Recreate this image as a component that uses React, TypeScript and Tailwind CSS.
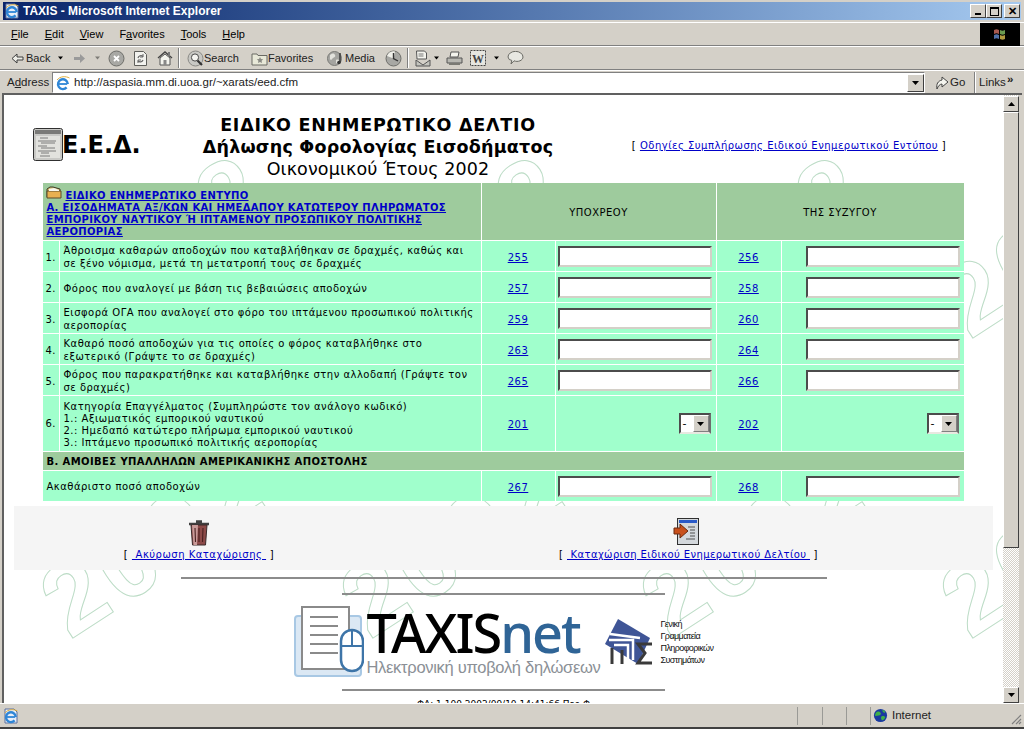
import type { ReactNode } from "react";

const rows = [
  { n: "1.", a: "255", b: "256", text: ["Άθροισμα καθαρών αποδοχών που καταβλήθηκαν σε δραχμές, καθώς και", "σε ξένο νόμισμα, μετά τη μετατροπή τους σε δραχμές"] },
  { n: "2.", a: "257", b: "258", text: ["Φόρος που αναλογεί με βάση τις βεβαιώσεις αποδοχών"] },
  { n: "3.", a: "259", b: "260", text: ["Εισφορά ΟΓΑ που αναλογεί στο φόρο του ιπτάμενου προσωπικού πολιτικής", "αεροπορίας"] },
  { n: "4.", a: "263", b: "264", text: ["Καθαρό ποσό αποδοχών για τις οποίες ο φόρος καταβλήθηκε στο", "εξωτερικό (Γράψτε το σε δραχμές)"] },
  { n: "5.", a: "265", b: "266", text: ["Φόρος που παρακρατήθηκε και καταβλήθηκε στην αλλοδαπή (Γράψτε τον", "σε δραχμές)"] },
];

const Code = ({ children }: { children: ReactNode }) => (
  <a href="#" className="text-[#0000c8] underline">{children}</a>
);

const Field = () => (
  <input className="block ml-auto mr-[4px] h-[21px] w-[154px] border-2 border-t-[#4c4c4c] border-l-[#4c4c4c] border-b-[#d4d0c8] border-r-[#d4d0c8] bg-white" />
);

const Arrow = ({ size = 7 }: { size?: number }) => (
  <svg width={size} height={4} viewBox="0 0 7 4"><path d="M0 0h7L3.5 4z" fill="#000" /></svg>
);

const Combo = () => (
  <div className="ml-auto mr-[5px] flex h-[21px] w-[32px] border-2 border-t-[#4c4c4c] border-l-[#4c4c4c] border-b-[#e8e8e0] border-r-[#6c6c6c] bg-white">
    <span className="flex-1 pl-[2px] text-[11px] leading-[17px]">-</span>
    <span className="flex w-[16px] items-center justify-center border-l border-t border-white border-r border-b border-r-[#808080] border-b-[#808080] bg-[#d4d0c8]">
      <Arrow />
    </span>
  </div>
);

const IeIcon = ({ page = false }: { page?: boolean }) => (
  <svg width="16" height="16" viewBox="0 0 16 16">
    {page && <path d="M2 1h9l3 3v11H2z" fill="#e8eef8" stroke="#5a6f9c" />}
    <path d="M4 9h8.200" stroke="#2f86d6" strokeWidth="1.800" />
    <path d="M12.800 9A4.900 4.900 0 1 0 11.600 12.400" fill="none" stroke="#2f86d6" strokeWidth="2.400" />
    <path d="M2 5C5 1 11 1 14.500 3" fill="none" stroke="#e0b040" strokeWidth="1" />
  </svg>
);

// toolbar icons, drawn by hand
const BackIcon = () => (
  <svg width="13" height="11" viewBox="0 0 13 11"><path d="M1 5.500 6 1v3h6v3H6v3z" fill="#eeeee8" stroke="#3d3d3d" /></svg>
);
const ForwardIcon = () => (
  <svg width="13" height="11" viewBox="0 0 13 11"><path d="M12 5.500 7 1v3H1v3h6v3z" fill="#9a9a9a" /></svg>
);
const Stop = () => (
  <svg width="17" height="17" viewBox="0 0 17 17">
    <circle cx="8.500" cy="8.500" r="7.500" fill="#a8a8a4" stroke="#6e6e6a" />
    <path d="M6 6l5 5M11 6l-5 5" stroke="#fff" strokeWidth="1.800" />
  </svg>
);
const Refresh = () => (
  <svg width="15" height="17" viewBox="0 0 15 17">
    <path d="M1.500 1.500h9l3 3v11h-12z" fill="#f2f2ee" stroke="#5e5e5a" />
    <path d="M5 8a3 3 0 0 1 5-1.500M10 10a3 3 0 0 1-5 1" fill="none" stroke="#666" strokeWidth="1.200" />
    <path d="M10 4v3H7M5 13v-3h3" fill="none" stroke="#666" />
  </svg>
);
const Home = () => (
  <svg width="16" height="16" viewBox="0 0 16 16">
    <path d="M1 8 8 2l7 6" fill="none" stroke="#444" strokeWidth="1.400" />
    <path d="M3 8v7h10V8L8 4z" fill="#f4f4ee" stroke="#555" />
    <rect x="6.500" y="10" width="3" height="5" fill="#888" />
    <rect x="11" y="2" width="2" height="4" fill="#777" />
  </svg>
);
const Search = () => (
  <svg width="17" height="17" viewBox="0 0 17 17">
    <circle cx="8.500" cy="8.500" r="7.500" fill="#c8c8c4" stroke="#8a8a86" />
    <circle cx="8" cy="7.500" r="3.600" fill="#f4f4f0" stroke="#4a4a4a" />
    <path d="M10.500 10.500 15 15" stroke="#333" strokeWidth="2.200" />
  </svg>
);
const FavIcon = () => (
  <svg width="17" height="15" viewBox="0 0 17 15">
    <path d="M1 3h5l1 1.500h9V14H1z" fill="#e8e8d8" stroke="#6a6a64" />
    <path d="M9 6l1 2 2.200.3-1.600 1.500.4 2.200-2-1-2 1 .4-2.200-1.600-1.500L8 8z" fill="#8a8a84" />
  </svg>
);
const MediaIcon = () => (
  <svg width="18" height="17" viewBox="0 0 18 17">
    <circle cx="7.500" cy="8.500" r="7" fill="#a4a4a0" stroke="#7a7a76" />
    <path d="M3 5c2-2 4-2 5 0s-1 2-2 3-2 3-3 1zM9 10c2-1 3 0 3 1s-2 3-3 2z" fill="#e2e2dc" />
    <path d="M13 3v9" stroke="#333" strokeWidth="1.400" />
    <circle cx="12" cy="12.500" r="1.800" fill="#333" />
  </svg>
);
const HistoryIcon = () => (
  <svg width="17" height="17" viewBox="0 0 17 17">
    <circle cx="8.500" cy="8.500" r="7.500" fill="#a8a8a4" stroke="#6e6e6a" />
    <path d="M8.500 8.500 2 6A7 7 0 0 1 10 1.500z" fill="#f0f0ea" />
    <path d="M8.500 3v5.500L13 11" fill="none" stroke="#333" strokeWidth="1.400" />
  </svg>
);
const MailIcon = () => (
  <svg width="16" height="17" viewBox="0 0 16 17">
    <path d="M1.500 1h8l2 2v6h-9.500z" fill="#f4f4ee" stroke="#555" />
    <path d="M3.500 4h5M3.500 6h5" stroke="#777" />
    <path d="M1 10l7 5 7-5v6H1z" fill="#c4c4be" stroke="#555" />
  </svg>
);
const PrintIcon = () => (
  <svg width="17" height="15" viewBox="0 0 17 15">
    <path d="M5 1h8l-1 5H4z" fill="#f4f4ee" stroke="#555" />
    <path d="M1 7h15v5H1z" fill="#b8b8b2" stroke="#555" />
    <path d="M3 12h11v2H3z" fill="#7a7a74" />
  </svg>
);
const WordIcon = () => (
  <svg width="16" height="16" viewBox="0 0 16 16">
    <rect x=".5" y=".5" width="15" height="15" fill="#e6e6e0" stroke="#444" strokeDasharray="2 1" />
    <text x="8" y="13" textAnchor="middle" fontSize="12" fontWeight="700" fontFamily="Liberation Serif, serif" fill="#444">W</text>
  </svg>
);
const Discuss = () => (
  <svg width="17" height="15" viewBox="0 0 17 15">
    <path d="M1 6a6 4.500 0 0 1 15 0 6 4.500 0 0 1-9 3.800L4 13l.8-3.600A4 4 0 0 1 1 6z" fill="#e8e8e2" stroke="#6a6a64" />
  </svg>
);

const TbSep = () => <span className="ml-[5px] h-[20px] w-[2px] border-l border-r border-l-[#808080] border-r-white" />;

const GoIcon = () => (
  <svg width="14" height="15" viewBox="0 0 14 15">
    <path d="M2 14C1 9 3 6 7 5V2l6 5-6 5V9C5 9 3 11 2 14z" fill="#f4f4ee" stroke="#444" />
  </svg>
);

const FlagBox = () => (
  <svg width="16" height="15" viewBox="0 0 16 15">
    <path d="M2 3c2-1 3-1 5 0v4C5 6 4 6 2 7z" fill="#a85a50" />
    <path d="M8 3c2 1 3 1 5 0v4c-2 1-3 1-5 0z" fill="#6a9a50" />
    <path d="M2 8c2-1 3-1 5 0v4c-2-1-3-1-5 0z" fill="#5070a8" />
    <path d="M8 8c2 1 3 1 5 0v4c-2 1-3 1-5 0z" fill="#b09a40" />
  </svg>
);

const EedIcon = () => (
  <svg width="30" height="33" viewBox="0 0 30 33">
    <rect x=".5" y=".5" width="29" height="32" rx="2" fill="#c9c9c6" stroke="#303030" />
    <rect x="2" y="2" width="26" height="4" fill="#7a7a78" />
    <rect x="3" y="8" width="24" height="22" fill="#e2e2de" />
    <path d="M7 10h8M5 13h18M8 15h14M5 18h9M8 20h14M5 23h18M8 25h8M7 28h10" stroke="#707070" strokeWidth=".9" />
  </svg>
);

const Folder = () => (
  <svg className="self-start" width="16" height="13" viewBox="0 0 16 13">
    <path d="M1 3l3-2 3 0 7 2v8H1z" fill="#d8c070" stroke="#3a3a2a" />
    <path d="M1 5h14v7H1z" fill="#e8b050" stroke="#5a4a2a" />
    <path d="M3 3l5-1 5 2v1H3z" fill="#f8f8f0" />
  </svg>
);

const Trash = () => (
  <svg width="22" height="27" viewBox="0 0 22 27">
    <path d="M8 2.500h6M1 5h20" stroke="#404040" strokeWidth="2.500" />
    <path d="M3 6h16l-1.500 20h-13z" fill="#8c4a48" stroke="#3a2a2a" />
    <path d="M4 6h6l-1 20H5.500z" fill="#c89a98" />
    <path d="M7 9l.5 14M11 9v14M15 9l-.5 14" stroke="#4a2020" strokeWidth="1.100" />
  </svg>
);

const SubmitIcon = () => (
  <svg width="27" height="28" viewBox="0 0 27 28">
    <rect x="4.500" y=".5" width="21" height="26" fill="#d4d8dc" stroke="#303030" />
    <rect x="6" y="2" width="18" height="3" fill="#2a5ac8" />
    <path d="M15 9h7M17 12h5M17 15h5M17 18h5M13 21h9" stroke="#505050" />
    <path d="M1 10h6V6l8 7-8 7v-4H1z" fill="#c8501c" stroke="#6a2a10" />
  </svg>
);

const DocMouse = () => (
  <svg className="shrink-0" width="70" height="74" viewBox="0 0 70 74">
    <rect x="1" y="11" width="66" height="60" rx="3" fill="#dbe8f4" stroke="#a8c8e4" strokeWidth="2" />
    <rect x="8" y="2" width="47" height="62" fill="#fff" stroke="#8a8a8a" strokeWidth="2" />
    <path d="M16 12h28M16 21h28M16 30h28M16 39h28M16 48h28" stroke="#8a8a8a" strokeWidth="1.800" />
    <rect x="47" y="25" width="22" height="41" rx="11" fill="#fff" stroke="#3e75a8" strokeWidth="2.500" />
    <path d="M47 41h22M58 25v16" stroke="#3e75a8" strokeWidth="2" />
  </svg>
);

const GgpsLogo = () => (
  <svg className="shrink-0" width="48" height="48" viewBox="0 0 48 48">
    <path d="M13 1 45 20 33 46 0 26z" fill="#3f5596" />
    <path d="M5 16 35 20M4 22h24v20M9 27h14v16" fill="none" stroke="#fff" strokeWidth="2.500" />
    <path d="M7 30v16M17 32v14" stroke="#3a3a3a" strokeWidth="3" />
    <path d="M47 26H33l7 9-7 10h14" fill="none" stroke="#3a3a3a" strokeWidth="3" />
  </svg>
);

// the tiled outline 2002 behind the page
const Watermark = () => (
  <svg className="absolute left-0 top-0" width="999" height="608">
    <defs>
      <pattern id="wm" width="300" height="300" patternUnits="userSpaceOnUse">
        <text
          transform="translate(66 245) rotate(-33)"
          fontFamily="Liberation Sans, sans-serif"
          fontWeight="700"
          fontSize="100"
          letterSpacing="6"
          fill="none"
          stroke="#bcdcc6"
          strokeWidth="1"
        >
          2002
        </text>
      </pattern>
    </defs>
    <rect width="999" height="608" fill="url(#wm)" />
  </svg>
);

const ScrollBtn = ({ up }: { up?: boolean }) => (
  <div className="flex h-[16px] w-[16px] items-center justify-center border border-t-white border-l-white border-r-[#404040] border-b-[#404040] bg-[#d4d0c8]">
    <span className={up ? "rotate-180 flex" : "flex"}><Arrow /></span>
  </div>
);

const Caption = ({ children }: { children: ReactNode }) => (
  <span className="flex h-[14px] w-[16px] items-center justify-center border border-t-white border-l-white border-r-[#404040] border-b-[#404040] bg-[#d4d0c8]">
    {children}
  </span>
);

const App = () => {
  return (
    <div className="flex h-[729px] w-[1024px] flex-col overflow-hidden bg-[#d4d0c8] font-['Liberation_Sans',sans-serif] text-black">
      {/* title bar */}
      <div className="mx-[3px] mt-[2px] flex h-[18px] items-center bg-gradient-to-r from-[#0a246a] to-[#a6caf0] pl-[1px] pr-[1px]">
        <IeIcon page />
        <span className="ml-[3px] text-[12px] font-bold leading-none text-white">TAXIS - Microsoft Internet Explorer</span>
        <div className="ml-auto flex">
          <Caption><span className="mt-[6px] h-[2px] w-[6px] bg-black" /></Caption>
          <Caption><span className="h-[9px] w-[9px] border border-t-2 border-black" /></Caption>
          <span className="w-[2px]" />
          <Caption><span className="text-[11px] font-bold leading-none">✕</span></Caption>
        </div>
      </div>

      {/* menu */}
      <div className="mt-[2px] flex h-[24px] items-center border-y border-t-white border-b-[#808080] pl-[11px] pr-[4px] text-[11px]">
        <div className="flex gap-[16px]">
          <span><u>F</u>ile</span>
          <span><u>E</u>dit</span>
          <span><u>V</u>iew</span>
          <span>F<u>a</u>vorites</span>
          <span><u>T</u>ools</span>
          <span><u>H</u>elp</span>
        </div>
        <div className="ml-auto flex h-[23px] w-[40px] items-center justify-center bg-black"><FlagBox /></div>
      </div>

      {/* toolbar */}
      <div className="flex h-[24px] items-center whitespace-nowrap border-y border-t-white border-b-[#808080] pl-[11px] text-[11px] text-[#222]">
        <BackIcon />
        <span className="ml-[2px] w-[23px]">Back</span>
        <span className="ml-[9px] flex"><Arrow size={5} /></span>
        <span className="ml-[10px] flex"><ForwardIcon /></span>
        <span className="ml-[9px] flex opacity-40"><Arrow size={5} /></span>
        <span className="ml-[8px] flex"><Stop /></span>
        <span className="ml-[8px] flex"><Refresh /></span>
        <span className="ml-[9px] flex"><Home /></span>
        <TbSep />
        <span className="ml-[7px] flex"><Search /></span>
        <span className="w-[33px]">Search</span>
        <span className="ml-[14px] flex"><FavIcon /></span>
        <span className="w-[46px]">Favorites</span>
        <span className="ml-[13px] flex"><MediaIcon /></span>
        <span className="w-[29px]">Media</span>
        <span className="ml-[11px] flex"><HistoryIcon /></span>
        <TbSep />
        <span className="ml-[6px] flex"><MailIcon /></span>
        <span className="ml-[3px] flex"><Arrow size={5} /></span>
        <span className="ml-[7px] flex"><PrintIcon /></span>
        <span className="ml-[7px] flex"><WordIcon /></span>
        <span className="ml-[8px] flex"><Arrow size={5} /></span>
        <span className="ml-[8px] flex"><Discuss /></span>
      </div>

      {/* address */}
      <div className="flex h-[23px] items-center whitespace-nowrap border-t border-t-white pl-[7px] pt-[1px] text-[11.5px] text-[#222]">
        <span className="w-[45px]">A<u>d</u>dress</span>
        <div className="flex h-[21px] w-[873px] items-center border border-t-[#808080] border-l-[#808080] border-b-white border-r-white bg-white pl-[2px]">
          <IeIcon />
          <span className="ml-[3px]">http://aspasia.mm.di.uoa.gr/~xarats/eed.cfm</span>
          <span className="ml-auto flex h-[18px] w-[17px] items-center justify-center border border-t-white border-l-white border-r-[#404040] border-b-[#404040] bg-[#d4d0c8]"><Arrow /></span>
        </div>
        <span className="ml-[10px] flex"><GoIcon /></span>
        <span className="ml-[1px] w-[14px]">Go</span>
        <span className="ml-[10px] h-[21px] w-[2px] border-l border-r border-l-[#808080] border-r-white" />
        <span className="ml-[3px] w-[25px]">Links</span>
        <span className="ml-[3px] -mt-[6px] font-bold leading-none">»</span>
      </div>

      {/* page + scrollbar */}
      <div className="mx-[2px] flex h-[610px] border-t-2 border-l-2 border-t-[#606060] border-l-[#606060]">
        <div className="relative h-[608px] w-[999px] overflow-hidden bg-white font-['DejaVu_Sans',sans-serif] text-[10px] tracking-[0.5px]">
          <Watermark />
          <div className="relative flex flex-col items-center">
            {/* heading */}
            <div className="flex h-[88px] w-full items-start pl-[29px] pt-[19px]">
              <div className="flex w-[150px] items-center pt-[14px]">
                <EedIcon />
                <span className="-ml-[1px] text-[24px] font-bold tracking-normal leading-none">Ε.Ε.Δ.</span>
              </div>
              <div className="w-[390px] text-center text-[17.5px] leading-[22px]">
                <div className="font-bold tracking-[0.76px]">ΕΙΔΙΚΟ ΕΝΗΜΕΡΩΤΙΚΟ ΔΕΛΤΙΟ</div>
                <div className="font-bold tracking-[0.22px]">Δήλωσης Φορολογίας Εισοδήματος</div>
                <div className="tracking-[0.13px]">Οικονομικού Έτους 2002</div>
              </div>
              <div className="ml-[36px] w-[360px] pt-[24px] text-center">
                [ <Code>Οδηγίες Συμπλήρωσης Ειδικού Ενημερωτικού Εντύπου</Code> ]
              </div>
            </div>

            {/* form table */}
            <table className="w-[920px] table-fixed border-separate border-spacing-0 bg-[#a0ffcc]">
              <colgroup>
                <col className="w-[17px]" />
                <col className="w-[421px]" />
                <col className="w-[74px]" />
                <col className="w-[161px]" />
                <col className="w-[65px]" />
                <col className="w-[182px]" />
              </colgroup>
              <tbody>
                <tr className="h-[58px] bg-[#9ecb9d]">
                  <td colSpan={2} className="border-b border-r border-white pl-[3px] pt-[3px] align-top font-bold leading-[12px] tracking-[0.35px] text-[#0000c8]">
                    <div className="flex h-[16px] items-end">
                      <Folder />
                      <a href="#" className="ml-[3px] underline">ΕΙΔΙΚΟ ΕΝΗΜΕΡΩΤΙΚΟ ΕΝΤΥΠΟ</a>
                    </div>
                    <a href="#" className="underline">Α. ΕΙΣΟΔΗΜΑΤΑ ΑΞ/ΚΩΝ ΚΑΙ ΗΜΕΔΑΠΟΥ ΚΑΤΩΤΕΡΟΥ ΠΛΗΡΩΜΑΤΟΣ<br />ΕΜΠΟΡΙΚΟΥ ΝΑΥΤΙΚΟΥ Ή ΙΠΤΑΜΕΝΟΥ ΠΡΟΣΩΠΙΚΟΥ ΠΟΛΙΤΙΚΗΣ<br />ΑΕΡΟΠΟΡΙΑΣ</a>
                  </td>
                  <td colSpan={2} className="border-b border-r border-white pt-[2px] text-center">ΥΠΟΧΡΕΟΥ</td>
                  <td colSpan={2} className="border-b border-white pt-[2px] text-center">ΤΗΣ ΣΥΖΥΓΟΥ</td>
                </tr>
                {rows.map((r) => (
                  <tr key={r.n} className="h-[31px]">
                    <td className="border-b border-r border-white pl-[2px] pt-[2px]">{r.n}</td>
                    <td className="border-b border-r border-white pl-[3px] pt-[2px] leading-[13px]">
                      {r.text.map((t) => <div key={t}>{t}</div>)}
                    </td>
                    <td className="border-b border-r border-white pt-[2px] text-center"><Code>{r.a}</Code></td>
                    <td className="border-b border-r border-white"><Field /></td>
                    <td className="border-b border-r border-white pt-[2px] text-center"><Code>{r.b}</Code></td>
                    <td className="border-b border-white"><Field /></td>
                  </tr>
                ))}
                <tr className="h-[56px]">
                  <td className="border-b border-r border-white pl-[2px]">6.</td>
                  <td className="border-b border-r border-white pl-[3px] pt-[3px] leading-[12px]">
                    <div>Κατηγορία Επαγγέλματος (Συμπληρώστε τον ανάλογο κωδικό)</div>
                    <div>1.: Αξιωματικός εμπορικού ναυτικού</div>
                    <div>2.: Ημεδαπό κατώτερο πλήρωμα εμπορικού ναυτικού</div>
                    <div>3.: Ιπτάμενο προσωπικό πολιτικής αεροπορίας</div>
                  </td>
                  <td className="border-b border-r border-white pt-[2px] text-center"><Code>201</Code></td>
                  <td className="border-b border-r border-white"><Combo /></td>
                  <td className="border-b border-r border-white pt-[2px] text-center"><Code>202</Code></td>
                  <td className="border-b border-white"><Combo /></td>
                </tr>
                <tr className="h-[19px] bg-[#9ecb9d]">
                  <td colSpan={6} className="border-b border-white pl-[3px] font-bold tracking-[0.4px]">Β. ΑΜΟΙΒΕΣ ΥΠΑΛΛΗΛΩΝ ΑΜΕΡΙΚΑΝΙΚΗΣ ΑΠΟΣΤΟΛΗΣ</td>
                </tr>
                <tr className="h-[30px]">
                  <td colSpan={2} className="border-r border-white pl-[3px]">Ακαθάριστο ποσό αποδοχών</td>
                  <td className="border-r border-white pt-[2px] text-center"><Code>267</Code></td>
                  <td className="border-r border-white"><Field /></td>
                  <td className="border-r border-white pt-[2px] text-center"><Code>268</Code></td>
                  <td><Field /></td>
                </tr>
              </tbody>
            </table>

            {/* actions */}
            <div className="ml-[10px] mt-[5px] flex h-[64px] w-[979px] self-start bg-[#f5f5f5] pt-[13px] text-center">
              <div className="w-[370px]">
                <div className="flex justify-center"><Trash /></div>
                <div className="mt-[1px]">[ <a href="#" className="text-[#0000c8] underline">&nbsp;Ακύρωση Καταχώρισης&nbsp;</a> ]</div>
              </div>
              <div className="-mt-[1px] flex-1 tracking-[0.4px]">
                <div className="flex justify-center pr-[5px]"><SubmitIcon /></div>
                <div className="mt-[1px]">[ <a href="#" className="text-[#0000c8] underline">&nbsp;Καταχώριση Ειδικού Ενημερωτικού Δελτίου&nbsp;</a> ]</div>
              </div>
            </div>

            <hr className="mt-[7px] h-[2px] w-[646px] border-0 bg-[#8c8c8c]" />
            <hr className="mt-[14px] h-[2px] w-[323px] border-0 bg-[#8c8c8c]" />

            {/* logo */}
            <div className="flex h-[94px] w-[420px] items-center whitespace-nowrap tracking-normal">
              <DocMouse />
              <div className="ml-[3px] flex w-[237px] shrink-0 flex-col">
                <div className="font-['Noto_Sans',sans-serif] text-[54px] font-medium leading-[50px] tracking-[-2px]">
                  <span className="text-black">TAXIS</span><span className="text-[#2f6496]">net</span>
                </div>
                <div className="font-['Liberation_Sans',sans-serif] text-[16.5px] leading-[20px] tracking-[-0.3px] text-[#8b9096]">Ηλεκτρονική υποβολή δηλώσεων</div>
              </div>
              <div className="ml-[1px] flex"><GgpsLogo /></div>
              <div className="ml-[8px] font-['Liberation_Sans',sans-serif] text-[9px] leading-[12px] tracking-[-0.6px] text-[#111]">
                <div>Γενική</div>
                <div>Γραμματεία</div>
                <div>Πληροφορικών</div>
                <div>Συστημάτων</div>
              </div>
            </div>

            <hr className="h-[2px] w-[323px] border-0 bg-[#8c8c8c]" />
            <div className="mt-[7px] whitespace-nowrap text-center text-[9px] leading-[12px] tracking-normal">ΦΛ: 1.100 2002/09/10 14:41:66 Περ.Φ</div>
          </div>
        </div>

        {/* scrollbar */}
        <div className="flex h-[608px] w-[16px] flex-col bg-[repeating-conic-gradient(#d4d0c8_0_25%,#fff_0_50%)] bg-[length:2px_2px] pt-[1px]">
          <ScrollBtn up />
          <div className="h-[436px] border border-t-white border-l-white border-r-[#404040] border-b-[#404040] bg-[#d4d0c8]" />
          <div className="flex-1" />
          <ScrollBtn />
        </div>
      </div>

      {/* status bar */}
      <div className="flex h-[26px] items-center whitespace-nowrap border-t border-b-2 border-t-white border-b-[#404040] pl-[3px] pr-[2px] text-[11.5px] text-[#222]">
        <IeIcon page />
        <div className="ml-auto flex h-[18px] items-stretch">
          <span className="w-[25px] border-l border-l-[#9a9a96]" />
          <span className="w-[24px] border-l border-l-[#9a9a96]" />
          <span className="w-[24px] border-l border-l-[#9a9a96]" />
          <span className="flex w-[152px] items-center border-l border-l-[#9a9a96] pl-[2px]">
            <svg width="15" height="15" viewBox="0 0 16 16">
              <circle cx="8" cy="8" r="7" fill="#1a3aa0" />
              <path d="M3 5c2-2 4-1 5 0s0 3-2 3-3 1-4 0zM9 9c2-1 4 0 4 1s-2 3-3 3-2-3-1-4zM10 2c2 0 3 1 3 3-2 0-3-1-3-3z" fill="#3fb048" />
            </svg>
            <span className="ml-[4px]">Internet</span>
            <svg className="ml-auto self-end" width="12" height="12" viewBox="0 0 12 12">
              <path d="M11 2 2 11M11 6l-5 5M11 9l-2 2" stroke="#808080" strokeWidth="1.200" />
            </svg>
          </span>
        </div>
      </div>
    </div>
  );
};

export default App;
